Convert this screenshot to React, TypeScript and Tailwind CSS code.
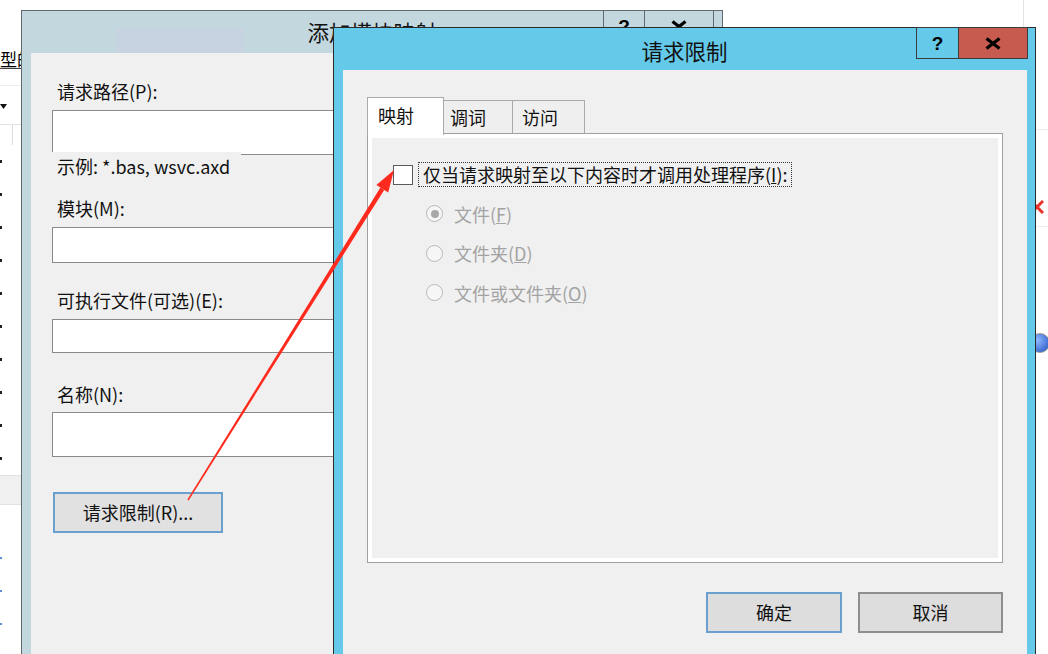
import React from "react";

const font = "font-['Noto_Sans_CJK_SC','Noto_Sans',sans-serif]";

const CloseGlyph = () => (
  <svg viewBox="0 0 18 13" className="h-[13px] w-[18px]">
    <path d="M2.5 1.5L15.5 11.5M15.5 1.5L2.5 11.5" stroke="#000" strokeWidth="3.2" />
  </svg>
);

function LeftWindow() {
  const rows = Array.from({ length: 10 });
  const blue = Array.from({ length: 3 });
  return (
    <div className="absolute left-0 top-0 flex h-full w-[21px] flex-col overflow-hidden bg-white">
      <div className="mt-[49px] w-[40px] whitespace-nowrap border-b border-[#444] text-[17px] leading-[19px]">型的</div>
      <div className="mt-[16px] h-[39px] border-t border-[#ececec] pt-[18px]">
        <svg viewBox="0 0 7 5" className="h-[5px] w-[7px]">
          <polygon points="0,0 7,0 3.5,5" fill="#111" />
        </svg>
      </div>
      <div className="flex h-[21px] border-t border-[#e3e3e3]">
        <div className="w-[13px] border-r border-[#dcdcdc]" />
      </div>
      {rows.map((_, i) => (
        <div key={i} className="flex h-[33px] items-center">
          <div className="h-[3px] w-[2px] bg-[#222]" />
        </div>
      ))}
      <div className="h-[30px] shrink-0 border-y border-[#e3e3e3] bg-[#f0f0f0]" />
      <div className="h-[36px] shrink-0" />
      {blue.map((_, i) => (
        <div key={i} className="flex h-[33px] shrink-0 items-center">
          <div className="h-[2px] w-[2px] bg-[#5b8fd6]" />
        </div>
      ))}
    </div>
  );
}

function RightWindow() {
  return (
    <div className="absolute left-[1020px] top-0 flex h-full w-[28px] overflow-hidden bg-white">
      <div className="h-[60px] w-[10px] bg-[#dcdcdc]" />
      <div className="ml-[3px] flex flex-1 flex-col border-l border-[#e3e3e3]">
        <div className="h-[130px] shrink-0 border-b border-[#ececec]" />
        <div className="h-[97px] shrink-0 border-b border-[#ececec] pl-[6px] pt-[70px]">
          <svg viewBox="0 0 14 14" className="h-[14px] w-[14px]">
            <path d="M1 1L13 13M13 1L1 13" stroke="#e8322a" strokeWidth="3" />
          </svg>
        </div>
        <div className="h-[98px] shrink-0 pl-[6px] pt-[106px]">
          <div className="h-[20px] w-[20px] rounded-full border border-[#9a9a9a] bg-[radial-gradient(circle_at_35%_35%,#8fb8ff,#1f4fc0)]" />
        </div>
      </div>
    </div>
  );
}

function ModuleMappingDialog() {
  const label = "h-[24px] pl-[5px] text-[18px] leading-[24px] text-[#111]";
  const input = "w-[620px] border border-[#8a8a8a] bg-white";
  return (
    <div className="absolute left-[21px] top-[10px] flex h-[700px] w-[702px] flex-col border border-[#5f6b70] bg-[#c3d7de]">
      <div className="relative h-[42px] shrink-0">
        <div className="absolute left-[94px] top-[17px] h-[25px] w-[128px] bg-[#c7d3e1]" />
        <div className="relative text-center text-[21.5px] leading-[42px] text-[#111]">添加模块映射</div>
        <div className="absolute right-[8px] top-[-1px] flex h-[32px]">
          <div className="flex w-[41px] items-center justify-center border border-r-0 border-[#5f6b70] font-['Liberation_Sans',sans-serif] text-[19px] font-bold leading-none">?</div>
          <div className="flex w-[70px] items-center justify-center border border-[#5f6b70]">
            <CloseGlyph />
          </div>
        </div>
      </div>
      <div className="ml-[9px] mr-[9px] flex flex-1 flex-col bg-[#f0f0f0] pl-[21px]">
        <div className={`mt-[26px] ${label}`}>请求路径(P):</div>
        <div className={`mt-[7px] h-[45px] ${input}`} />
        <div className="relative -mt-[3px] h-[28px] w-[189px] bg-[#f0f0f0] pl-[5px] text-[18px] leading-[28px] text-[#111]">示例: *.bas, wsvc.axd</div>
        <div className={`mt-[16px] ${label}`}>模块(M):</div>
        <div className={`mt-[7px] h-[36px] ${input}`} />
        <div className={`mt-[25px] ${label}`}>可执行文件(可选)(E):</div>
        <div className={`mt-[7px] h-[34px] ${input}`} />
        <div className={`mt-[29px] ${label}`}>名称(N):</div>
        <div className={`mt-[6px] h-[45px] ${input}`} />
        <button className="ml-[1px] mt-[35px] h-[41px] w-[170px] border-2 border-[#6a9fd0] bg-[#e1e1e1] text-[18px] text-[#111]">
          请求限制(R)...
        </button>
      </div>
    </div>
  );
}

function Radio({ checked, children }: { checked?: boolean; children: React.ReactNode }) {
  return (
    <div className="flex h-[39.5px] items-center pl-[54px]">
      <div className="flex h-[17px] w-[17px] items-center justify-center rounded-full border border-[#b8b8b8] bg-[#f6f6f6]">
        {checked && <div className="h-[8px] w-[8px] rounded-full bg-[#a8a8a8]" />}
      </div>
      <span className="ml-[11px] text-[18px] leading-[24px] text-[#a3a3a3]">{children}</span>
    </div>
  );
}

function RequestRestrictionsDialog() {
  return (
    <div className="absolute left-[333px] top-[27px] flex h-[660px] w-[703px] flex-col border border-[#2b2b2b] bg-[#65c9ea]">
      <div className="relative h-[42px] shrink-0">
        <div className="pt-[2px] text-center text-[21.5px] leading-[42px] text-[#111]">请求限制</div>
        <div className="absolute right-[7px] top-[-1px] flex h-[32px]">
          <div className="flex w-[42px] items-center justify-center border border-r-0 border-[#3b3b3b] font-['Liberation_Sans',sans-serif] text-[19px] font-bold leading-none">?</div>
          <div className="flex w-[70px] items-center justify-center border border-[#3b3b3b] bg-[#c75b50]">
            <CloseGlyph />
          </div>
        </div>
      </div>
      <div className="ml-[9px] mr-[8px] flex flex-1 flex-col bg-[#f0f0f0] px-[24px] pt-[27px]">
        <div className="flex h-[36px] items-end text-[18px] leading-[24px] text-[#111]">
          <div className="relative z-10 -mb-[2px] h-[38px] w-[77px] border-x border-t border-[#a9a9a9] bg-white pl-[10px] pt-[5px]">映射</div>
          <div className="h-[33px] w-[69px] border-r border-t border-[#a9a9a9] bg-[#efefef] pl-[6px] pt-[4px]">调词</div>
          <div className="h-[33px] w-[72px] border-r border-t border-[#a9a9a9] bg-[#efefef] pl-[9px] pt-[4px]">访问</div>
        </div>
        <div className="h-[430px] shrink-0 border border-[#a0a0a0]">
          <div className="h-full border-[4px] border-white bg-[#f0f0f0]">
            <div className="mt-[24px] flex items-center pl-[21px]">
              <div className="h-[20px] w-[20px] border border-[#5a5a5a] bg-white" />
              <div className="ml-[5px] border border-dotted border-[#333] px-[4px] text-[18px] leading-[23px] text-[#111]">
                仅当请求映射至以下内容时才调用处理程序(<span className="underline">I</span>):
              </div>
            </div>
            <div className="mt-[7px]">
              <Radio checked>
                文件(<span className="underline">F</span>)
              </Radio>
              <Radio>
                文件夹(<span className="underline">D</span>)
              </Radio>
              <Radio>
                文件或文件夹(<span className="underline">O</span>)
              </Radio>
            </div>
          </div>
        </div>
        <div className="mt-[29px] flex justify-end gap-[16px] text-[18px] text-[#111]">
          <button className="h-[41px] w-[136px] border-2 border-[#6a9fd0] bg-[#dddddd]">确定</button>
          <button className="h-[41px] w-[145px] border-2 border-[#8e8e8e] bg-[#dddddd]">取消</button>
        </div>
      </div>
    </div>
  );
}

function Arrow() {
  return (
    <svg className="pointer-events-none absolute inset-0 z-50 h-[654px] w-[1048px]" viewBox="0 0 1048 654">
      <polygon points="188.6,500.4 187.4,499.6 380.4,187.5 384.2,189.9" fill="#ff2a1e" />
      <polygon points="394,170 376.4,185 388.2,192.4" fill="#ff2a1e" />
    </svg>
  );
}

export default function App() {
  return (
    <div className={`relative h-[654px] w-[1048px] overflow-hidden bg-white text-black ${font}`}>
      <LeftWindow />
      <RightWindow />
      <ModuleMappingDialog />
      <RequestRestrictionsDialog />
      <Arrow />
    </div>
  );
}
